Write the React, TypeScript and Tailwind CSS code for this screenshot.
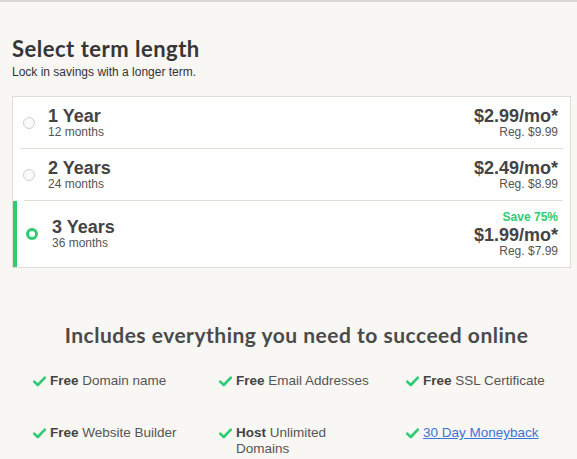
import React from "react";

const arial = { fontFamily: '"Liberation Sans", Arial, sans-serif' };

function Check() {
  return (
    <svg width="13" height="11" viewBox="0 0 13 11" className="shrink-0 mt-[3px]">
      <path d="M1.2 5.6 L4.8 9 L11.8 1.6" fill="none" stroke="#2ecc71" strokeWidth="2.6" strokeLinecap="round" strokeLinejoin="round" />
    </svg>
  );
}

const terms = [
  { t: "1 Year", m: "12 months", p: "$2.99/mo*", r: "Reg. $9.99" },
  { t: "2 Years", m: "24 months", p: "$2.49/mo*", r: "Reg. $8.99" },
];

export default function App() {
  return (
    <div className="w-[577px] h-[459px] bg-[#f8f7f4] border-t-2 border-[#d9d8d6] overflow-hidden text-[#444]" style={arial}>
      <div className="pl-[12px] pr-[6px]">
        <h1 className="mt-[33px] text-[22px] leading-[28px] font-bold text-[#363636] tracking-[0.5px]" style={{ fontFamily: 'Lato, sans-serif' }}>
          Select term length
        </h1>
        <p className="text-[12px] leading-[14px] mt-[2px] text-[#333]">Lock in savings with a longer term.</p>
        <div className="mt-[17px] bg-white border border-[#e0ddd7] flex flex-col">
          {terms.map((x, i) => (
            <div key={i} className={`flex items-center h-[52px] ${i === 0 ? "ml-[7px] mr-[7px] border-b" : "ml-[11px] mr-[7px] border-b"} border-[#e0ddd7]`}>
              <div className={`w-[12px] h-[12px] rounded-full border border-[#cfcfcf] bg-[#fafafa] ${i === 0 ? "ml-[3px]" : "-ml-[1px]"}`} />
              <div className="flex flex-col ml-[13px]">
                <span className="text-[18px] leading-[18px] font-bold text-[#444]">{x.t}</span>
                <span className="text-[12px] leading-[14px] text-[#555]">{x.m}</span>
              </div>
              <div className="ml-auto mr-[5px] flex flex-col items-end">
                <span className="text-[18px] leading-[18px] font-bold text-[#444]">{x.p}</span>
                <span className="text-[12px] leading-[14px] text-[#555]">{x.r}</span>
              </div>
            </div>
          ))}
          <div className="flex items-center h-[66px] border-l-4 border-[#2ecc71]">
            <div className="ml-[9px] w-[12px] h-[12px] rounded-full border-[3px] border-[#2ecc71] bg-white" />
            <div className="flex flex-col ml-[14px]">
              <span className="text-[18px] leading-[18px] font-bold text-[#444]">3 Years</span>
              <span className="text-[12px] leading-[14px] text-[#555]">36 months</span>
            </div>
            <div className="ml-auto mr-[12px] flex flex-col items-end">
              <span className="text-[12px] leading-[14px] font-bold text-[#2ecc71]">Save 75%</span>
              <span className="text-[18px] leading-[18px] font-bold text-[#444] mt-[2px]">$1.99/mo*</span>
              <span className="text-[12px] leading-[14px] text-[#555]">Reg. $7.99</span>
            </div>
          </div>
        </div>
        <h2 className="mt-[54px] pl-[10px] text-center text-[21px] leading-[26px] font-bold text-[#4a4a4a] tracking-[0.5px]" style={{ fontFamily: 'Lato, sans-serif' }}>
          Includes everything you need to succeed online
        </h2>
      </div>
      <div className="mt-[25px] pl-[33px] flex flex-col gap-y-[36px] text-[13.5px] leading-[16px] text-[#555]">
        <div className="flex">
          <div className="w-[186px] flex gap-[4px]"><Check /><span><b className="text-[#444]">Free</b> Domain name</span></div>
          <div className="w-[187px] flex gap-[4px]"><Check /><span><b className="text-[#444]">Free</b> Email Addresses</span></div>
          <div className="flex gap-[4px]"><Check /><span><b className="text-[#444]">Free</b> SSL Certificate</span></div>
        </div>
        <div className="flex">
          <div className="w-[186px] flex gap-[4px]"><Check /><span><b className="text-[#444]">Free</b> Website Builder</span></div>
          <div className="w-[187px] flex gap-[4px]"><Check /><span className="w-[120px]"><b className="text-[#444]">Host</b> Unlimited<br />Domains</span></div>
          <div className="flex gap-[4px]"><Check /><a href="#" className="underline text-[#3b73d9]">30 Day Moneyback</a></div>
        </div>
      </div>
    </div>
  );
}
